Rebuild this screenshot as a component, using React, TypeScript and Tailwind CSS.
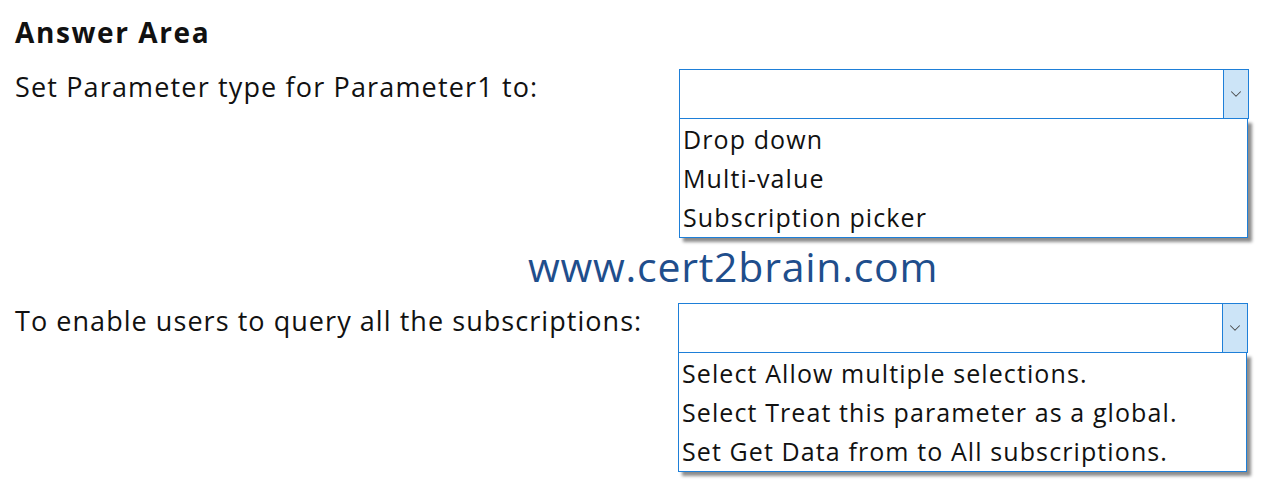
import { ChevronDown } from "lucide-react";

const font = { fontFamily: "'Open Sans', Lato, sans-serif" };

function Dropdown({ options }: { options: string[] }) {
  return (
    <div className="w-[570px]">
      <div className="flex h-[50px] border border-[#1e7fd8] bg-white">
        <div className="flex-1" />
        <div className="flex w-[25px] items-center justify-center border-l border-[#1e7fd8] bg-[#cce4f7]">
          <ChevronDown className="h-[18px] w-[18px] text-[#4a4a4a]" strokeWidth={1.4} />
        </div>
      </div>
      <div className="w-[569px] border border-t-0 border-[#1e7fd8] bg-white pt-[1px] pl-[3px] shadow-[4px_4px_3px_rgba(0,0,0,0.45)]">
        {options.map((o) => (
          <div key={o} className="h-[39px] text-[25px] leading-[39px] tracking-[1.1px] text-[#111]">
            {o}
          </div>
        ))}
      </div>
    </div>
  );
}

export default function App() {
  return (
    <div className="flex h-[494px] w-[1274px] flex-col bg-white pl-[15px]" style={font}>
      <h1 className="pt-[14px] text-[28px] font-bold leading-[36px] tracking-[1.6px] text-[#111]">
        Answer Area
      </h1>

      <div className="mt-[19px] flex">
        <div className="w-[664px] text-[27px] leading-[36px] tracking-[1.15px] text-[#111]">
          Set Parameter type for Parameter1 to:
        </div>
        <Dropdown options={["Drop down", "Multi-value", "Subscription picker"]} />
      </div>

      <div className="ml-[513px] mt-[1px] text-[41px] leading-[54px] tracking-[0.75px] text-[#1f4e8c]">
        www.cert2brain.com
      </div>

      <div className="mt-[10px] flex">
        <div className="w-[663px] text-[27px] leading-[36px] tracking-[1.05px] text-[#111]">
          To enable users to query all the subscriptions:
        </div>
        <Dropdown
          options={[
            "Select Allow multiple selections.",
            "Select Treat this parameter as a global.",
            "Set Get Data from to All subscriptions.",
          ]}
        />
      </div>
    </div>
  );
}
